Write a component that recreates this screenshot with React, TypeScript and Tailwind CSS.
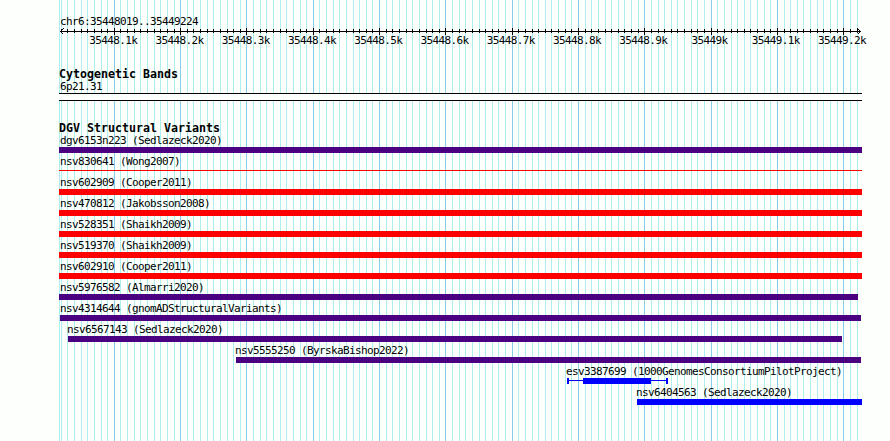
const FIRST_MAJOR = 114.35;
const STEP = 6.631;

const lines = Array.from({ length: 121 }, (_, n) => n - 8)
  .map((i) => ({
    x: Math.floor(FIRST_MAJOR + i * STEP) + 0.5,
    major: i % 10 === 0,
  }))
  .filter((line) => line.x < 862);

const labels = [
  "35448.1k", "35448.2k", "35448.3k", "35448.4k", "35448.5k", "35448.6k",
  "35448.7k", "35448.8k", "35448.9k", "35449k", "35449.1k", "35449.2k",
];

type Track = { name: string; textX: number; start: number; end: number; color: string; shape?: "thin" | "range" };

const PURPLE = "bg-[#4b0082]";
const RED = "bg-[#ff0000]";
const BLUE = "bg-[#0000ff]";

const tracks: Track[] = [
  { name: "dgv6153n223 (Sedlazeck2020)", textX: 60, start: 59, end: 862, color: PURPLE },
  { name: "nsv830641 (Wong2007)", textX: 60, start: 59, end: 862, color: RED, shape: "thin" },
  { name: "nsv602909 (Cooper2011)", textX: 60, start: 59, end: 862, color: RED },
  { name: "nsv470812 (Jakobsson2008)", textX: 60, start: 59, end: 862, color: RED },
  { name: "nsv528351 (Shaikh2009)", textX: 60, start: 59, end: 862, color: RED },
  { name: "nsv519370 (Shaikh2009)", textX: 60, start: 59, end: 862, color: RED },
  { name: "nsv602910 (Cooper2011)", textX: 60, start: 59, end: 862, color: RED },
  { name: "nsv5976582 (Almarri2020)", textX: 60, start: 59, end: 858, color: PURPLE },
  { name: "nsv4314644 (gnomADStructuralVariants)", textX: 60, start: 60, end: 861, color: PURPLE },
  { name: "nsv6567143 (Sedlazeck2020)", textX: 67, start: 68, end: 842, color: PURPLE },
  { name: "nsv5555250 (ByrskaBishop2022)", textX: 235, start: 236, end: 861, color: PURPLE },
  { name: "esv3387699 (1000GenomesConsortiumPilotProject)", textX: 566, start: 567, end: 668, color: BLUE, shape: "range" },
  { name: "nsv6404563 (Sedlazeck2020)", textX: 636, start: 637, end: 862, color: BLUE },
];

function Grid() {
  return (
    <svg className="absolute inset-0" width="890" height="441" shapeRendering="crispEdges">
      <path d="M59.5 0V441" stroke="#afeeee" />
      {lines.map((l) => (
        <path key={l.x} d={`M${l.x} 0V441`} stroke={l.major ? "#87ceeb" : "#afeeee"} />
      ))}
    </svg>
  );
}

function Ruler() {
  return (
    <svg className="block" width="890" height="8" fill="none" stroke="#000" shapeRendering="crispEdges">
      <path d="M60 3.5H861" />
      {lines.map((l) => (
        <path key={l.x} d={l.major ? `M${l.x} 0V7` : `M${l.x} 1V5`} />
      ))}
      <path d="M63.5 0.5L60.5 3.5L63.5 6.5M857.5 0.5L860.5 3.5L857.5 6.5" />
    </svg>
  );
}

function Bar({ track }: { track: Track }) {
  const place = { marginLeft: track.start, width: track.end - track.start };
  if (track.shape === "thin") return <div className={`mt-[2px] mb-[3px] h-px ${track.color}`} style={place} />;
  if (track.shape === "range")
    return (
      <div className="flex h-[6px] items-start" style={place}>
        <div className={`h-[6px] w-[2px] ${track.color}`} />
        <div className={`mt-[2px] h-px w-[14px] ${track.color}`} />
        <div className={`h-[6px] w-[68px] ${track.color}`} />
        <div className={`mt-[2px] h-px w-[15px] ${track.color}`} />
        <div className={`h-[6px] w-[2px] ${track.color}`} />
      </div>
    );
  return <div className={`h-[6px] ${track.color}`} style={place} />;
}

const heading = "h-[12px] pl-[59px] text-[11.63px] leading-[12px] font-bold tracking-normal";

export default function App() {
  return (
    <div className="relative h-[441px] w-[890px] overflow-hidden bg-[#fdfffc] font-['DejaVu_Sans_Mono',monospace] text-[11px] tracking-[-0.622px] whitespace-pre text-black">
      <Grid />
      <div className="relative">
        <div className="h-[28px] pt-[15px] pl-[60px] leading-[13px]">chr6:35448019..35449224</div>
        <Ruler />
        <div className="flex h-[32px] pl-[80px] leading-[10px]">
          {labels.map((label) => (
            <div key={label} className="w-[66.27px] shrink-0 text-center">{label}</div>
          ))}
        </div>
        <div className={heading}>Cytogenetic Bands</div>
        <div className="h-[13px] pl-[60px] leading-[14px]">6p21.31</div>
        <div className="ml-[59px] h-[8px] w-[803px] border-y border-black bg-[#fdfffc]" />
        <div className="h-[21px]" />
        <div className={heading}>DGV Structural Variants</div>
        {tracks.map((track) => (
          <div key={track.name} className="h-[21px]">
            <div className="h-[13px] leading-[14px]" style={{ paddingLeft: track.textX }}>{track.name}</div>
            <Bar track={track} />
          </div>
        ))}
      </div>
    </div>
  );
}
